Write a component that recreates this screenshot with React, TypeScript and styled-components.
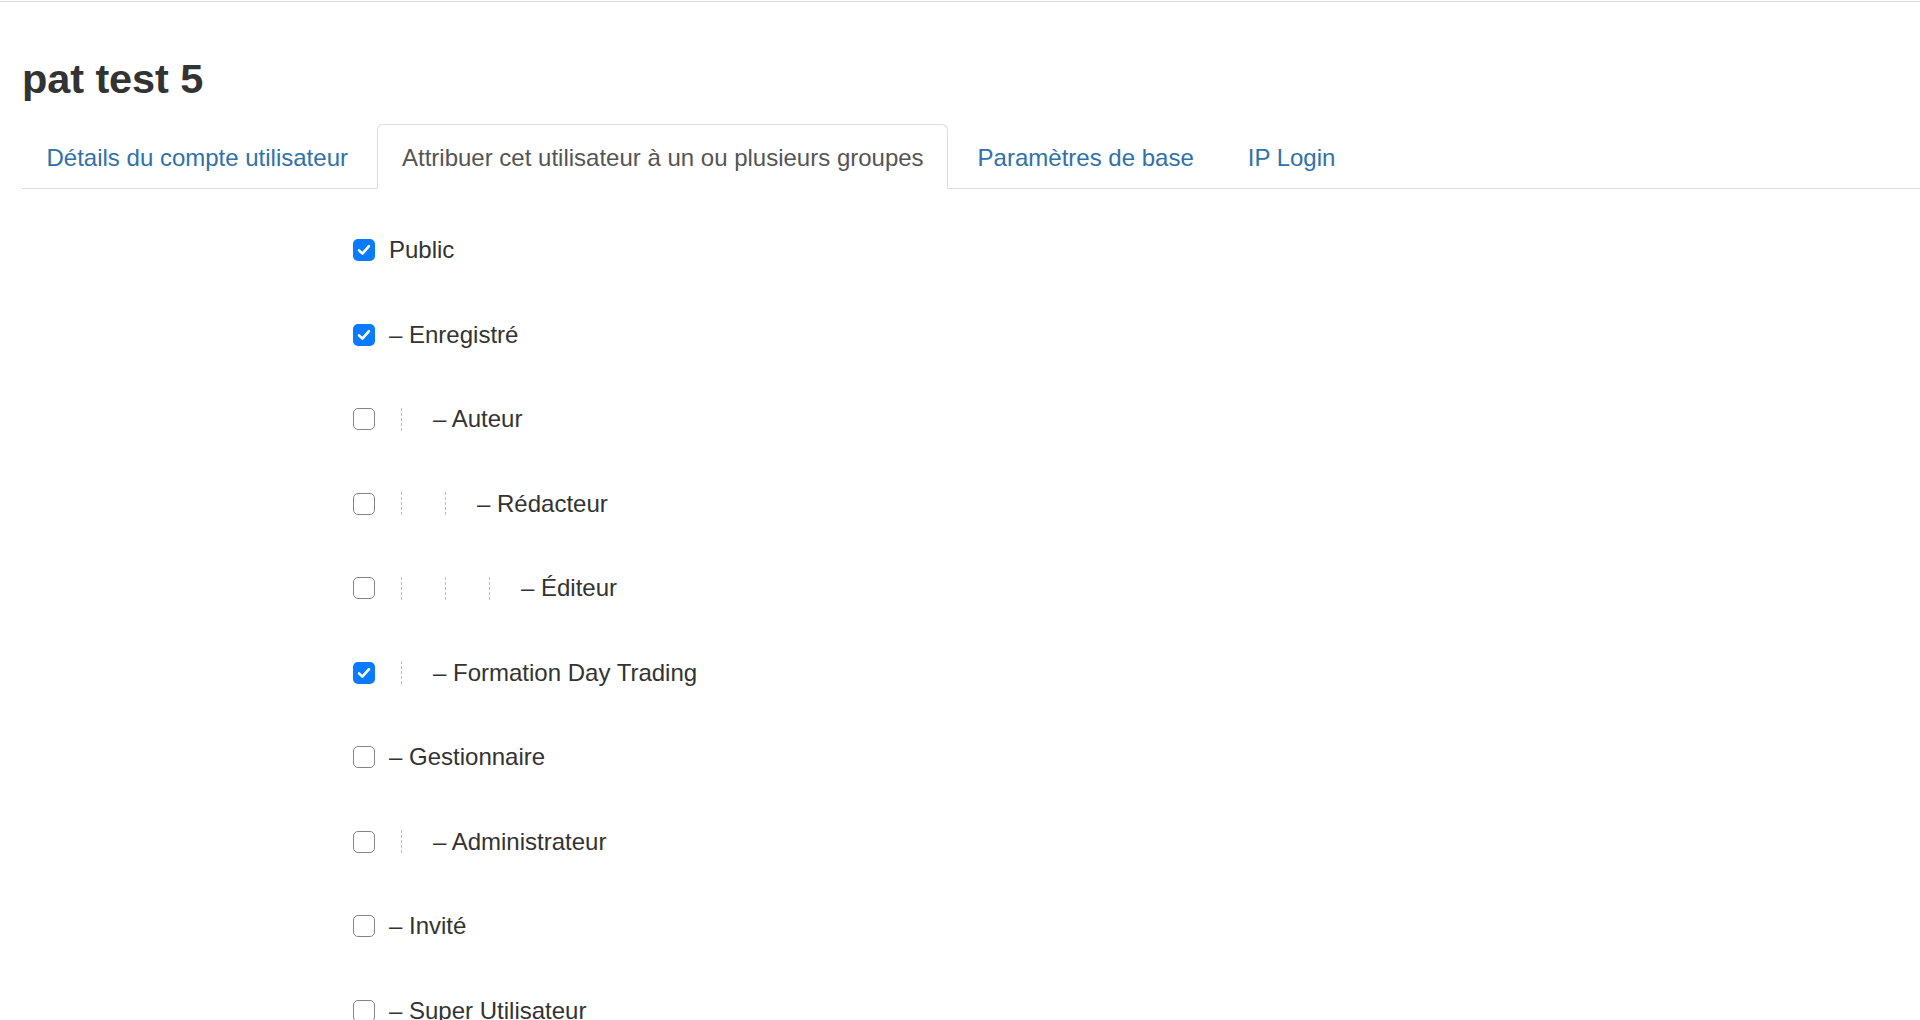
import React from 'react'
import styled, { createGlobalStyle } from 'styled-components'

const GlobalStyle = createGlobalStyle`
  html, body {
    margin: 0;
    padding: 0;
    background: #fff;
    overflow: hidden;
  }
  body {
    font-family: 'Liberation Sans', Arial, Helvetica, sans-serif;
    color: #333;
  }
`

const Page = styled.div`
  width: 100%;
  min-height: 100vh;
  border-top: 1px solid #dcdcdc;
  margin-top: 1px;
  padding-left: 22px;
  box-sizing: border-box;
`

const Title = styled.h1`
  margin: 53px 0 21px 0;
  font-size: 41.5px;
  line-height: 48px;
  font-weight: bold;
  color: #333;
  letter-spacing: -0.1px;
`

const Tabs = styled.ul`
  display: flex;
  margin: 0;
  padding: 0;
  list-style: none;
  border-bottom: 1px solid #ddd;
`

const TabItem = styled.li`
  margin-right: 5px;
  margin-bottom: -1px;
`

const TabLink = styled.a<{ $active?: boolean }>`
  display: block;
  padding: 18px 23.5px 15px;
  font-size: 24px;
  line-height: 30px;
  text-decoration: none;
  border: 1px solid ${(p) => (p.$active ? '#ddd' : 'transparent')};
  border-bottom-color: ${(p) => (p.$active ? '#fff' : 'transparent')};
  border-radius: 6px 6px 0 0;
  background: ${(p) => (p.$active ? '#fff' : 'transparent')};
  color: ${(p) => (p.$active ? '#555' : '#3071a9')};
  cursor: pointer;
`

const GroupList = styled.div`
  display: flex;
  flex-direction: column;
  gap: 54.5px;
  padding: 46px 0 0 331px;
`

const Row = styled.label`
  display: flex;
  align-items: center;
  height: 30px;
  font-size: 24px;
  line-height: 30px;
  color: #333;
`

const Box = styled.span<{ $checked?: boolean }>`
  flex: none;
  width: 22px;
  height: 22px;
  box-sizing: border-box;
  border-radius: 5px;
  margin-right: 14px;
  display: flex;
  align-items: center;
  justify-content: center;
  background: ${(p) => (p.$checked ? '#0a7bff' : '#fff')};
  border: ${(p) => (p.$checked ? 'none' : '1.5px solid #858585')};
`

const Indent = styled.span`
  flex: none;
  width: 44px;
  height: 30px;
  display: flex;
  align-items: center;

  &::before {
    content: '';
    display: block;
    margin-left: 12px;
    height: 23px;
    border-left: 1px dashed #bdbdbd;
  }
`

type Group = {
  name: string
  level: number
  dash: boolean
  checked: boolean
}

const groups: Group[] = [
  { name: 'Public', level: 0, dash: false, checked: true },
  { name: 'Enregistré', level: 0, dash: true, checked: true },
  { name: 'Auteur', level: 1, dash: true, checked: false },
  { name: 'Rédacteur', level: 2, dash: true, checked: false },
  { name: 'Éditeur', level: 3, dash: true, checked: false },
  { name: 'Formation Day Trading', level: 1, dash: true, checked: true },
  { name: 'Gestionnaire', level: 0, dash: true, checked: false },
  { name: 'Administrateur', level: 1, dash: true, checked: false },
  { name: 'Invité', level: 0, dash: true, checked: false },
  { name: 'Super Utilisateur', level: 0, dash: true, checked: false },
]

const tabs = [
  'Détails du compte utilisateur',
  'Attribuer cet utilisateur à un ou plusieurs groupes',
  'Paramètres de base',
  'IP Login',
]

const Check = () => (
  <svg width="14" height="12" viewBox="0 0 14 12">
    <path
      d="M2 6.4 L5.4 9.6 L12 2.2"
      fill="none"
      stroke="#fff"
      strokeWidth="2.6"
      strokeLinecap="round"
      strokeLinejoin="round"
    />
  </svg>
)

export default function App() {
  return (
    <Page>
      <GlobalStyle />
      <Title>pat test 5</Title>
      <Tabs>
        {tabs.map((tab, i) => (
          <TabItem key={tab}>
            <TabLink $active={i === 1}>{tab}</TabLink>
          </TabItem>
        ))}
      </Tabs>
      <GroupList>
        {groups.map((g) => (
          <Row key={g.name}>
            <Box $checked={g.checked}>{g.checked && <Check />}</Box>
            {Array.from({ length: g.level }).map((_, i) => (
              <Indent key={i} />
            ))}
            <span>{g.dash ? `– ${g.name}` : g.name}</span>
          </Row>
        ))}
      </GroupList>
    </Page>
  )
}
